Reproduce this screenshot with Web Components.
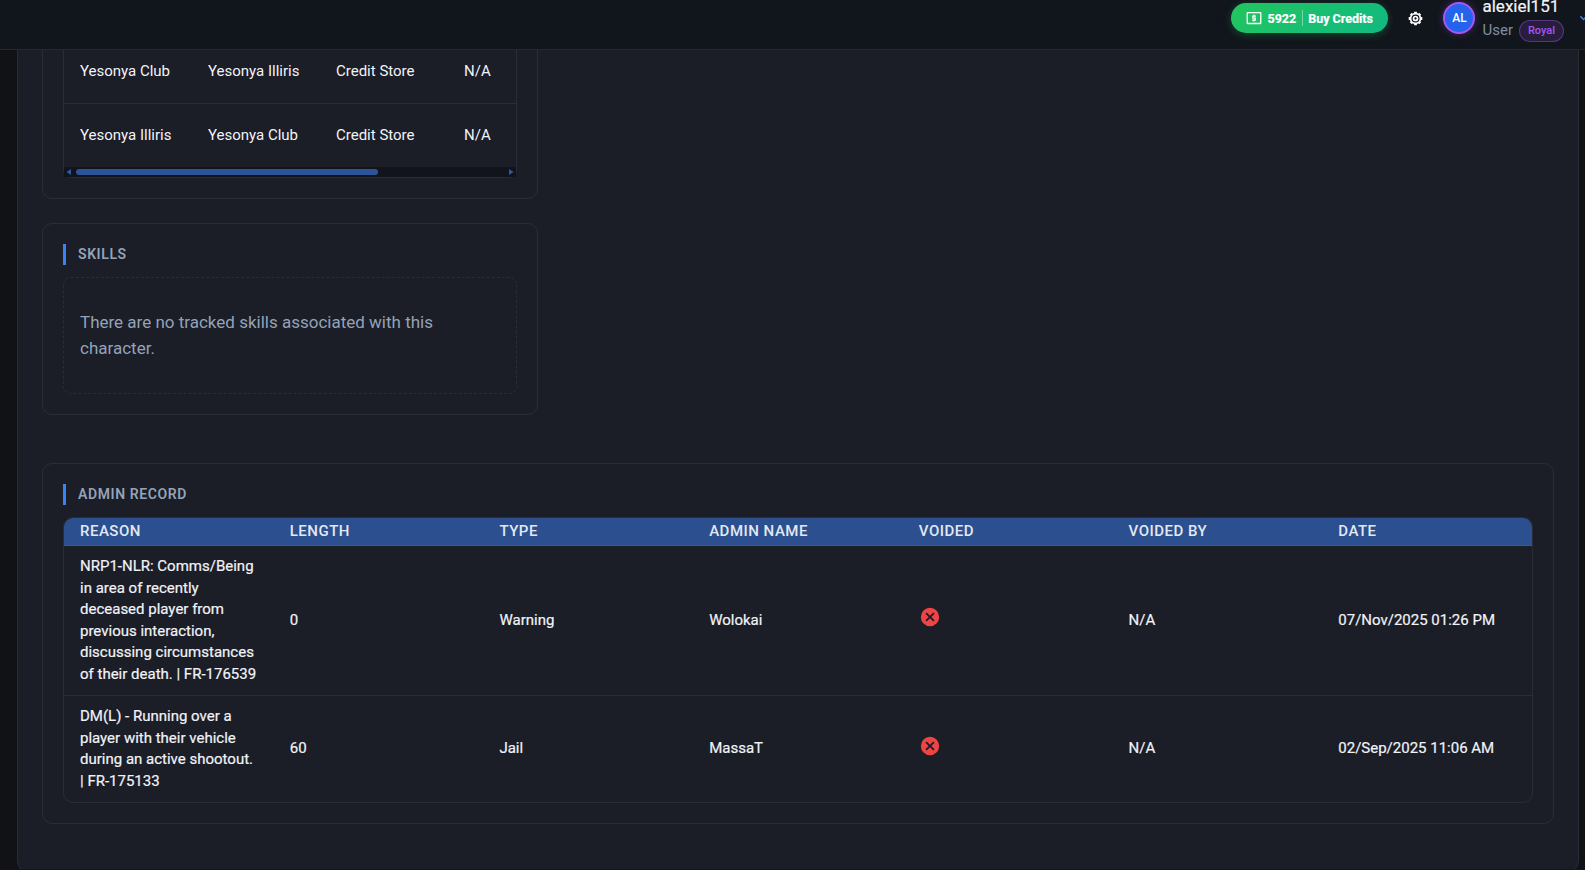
<!DOCTYPE html>
<html lang="en">
<head>
<meta charset="UTF-8">
<title>Character</title>
<style>
    :root {
        --bg: #111216;
        --bar: #11151c;
        --panel: #1b1d27;
        --line: #2a2c37;
        --text: #f1f3f7;
        --muted: #94a3b8;
        --accent: #3b82f6;
        --primary: #2b4f8f;
    }
    html, body {
        margin: 0;
        height: 870px;
        overflow: hidden;
        background: var(--bg);
        color: var(--text);
        font-family: Roboto, "Liberation Sans", sans-serif;
        font-size: 15px;
    }
</style>
</head>
<body>
<character-page>
    <top-bar slot="header">
        <credits-button amount="5922">Buy Credits</credits-button>
        <settings-icon></settings-icon>
        <user-menu name="alexiel151" initials="AL" role-name="User" rank="Royal"></user-menu>
    </top-bar>
    <info-card class="half">
        <transfer-table></transfer-table>
    </info-card>
    <info-card class="half" heading="Skills">
        <empty-note>There are no tracked skills associated with this character.</empty-note>
    </info-card>
    <info-card class="record" heading="Admin Record">
        <record-table></record-table>
    </info-card>
</character-page>

<script>
// Small helper: open shadow root with the given markup
class BaseElement extends HTMLElement {
    constructor() {
        super();
        this.attachShadow({ mode: 'open' });
    }
    connectedCallback() {
        this.shadowRoot.innerHTML = this.render();
    }
}

class CharacterPage extends BaseElement {
    render() {
        return `
            <style>
                :host {
                    display: flex;
                    flex-direction: column;
                    box-sizing: border-box;
                    height: 870px;
                    border-bottom: 1px solid #14151d;
                }
                main {
                    flex: 1;
                    min-height: 0;
                    overflow: hidden;
                    padding: 0 6px 0 17px;
                }
                /* page is scrolled, so the panel starts above the bar */
                .panel {
                    margin-top: -57px;
                    padding: 24px 24px 48px;
                    background: var(--panel);
                    border: 1px solid var(--line);
                    border-radius: 12px;
                    display: flex;
                    flex-direction: column;
                    gap: 24px;
                }
                ::slotted(.half) { width: 496px; }
                ::slotted(.record) { margin-top: 24px; }
            </style>
            <slot name="header"></slot>
            <main><div class="panel"><slot></slot></div></main>
        `;
    }
}

class TopBar extends BaseElement {
    render() {
        return `
            <style>
                :host {
                    display: block;
                    flex: none;
                    height: 49px;
                    background: var(--bar);
                    border-bottom: 1px solid #262831;
                }
                .row {
                    display: flex;
                    align-items: center;
                    justify-content: flex-end;
                    height: 36px;
                }
            </style>
            <div class="row"><slot></slot></div>
        `;
    }
}

class CreditsButton extends BaseElement {
    render() {
        return `
            <style>
                :host {
                    display: flex;
                    align-items: center;
                    box-sizing: border-box;
                    width: 157px;
                    height: 30px;
                    margin-right: 20px;
                    padding-left: 15px;
                    border-radius: 15px;
                    background: linear-gradient(135deg, #22c55e, #10b981);
                    box-shadow: 0 2px 8px rgba(34, 197, 94, .3);
                    color: #fff;
                    font-size: 12.5px;
                    font-weight: 700;
                    -webkit-text-stroke: .2px #fff;
                    white-space: nowrap;
                }
                svg { margin-right: 5px; }
                i { width: 1px; height: 16px; margin: 0 5px 0 6px; background: rgba(255, 255, 255, .4); }
            </style>
            <svg width="16" height="14" viewBox="0 0 16 14" fill="none" stroke="#fff">
                <rect x="1.2" y="1.7" width="13.6" height="10.8" rx=".6" stroke-width="1.3"/>
                <path d="M10 5.1H6.9v2h2.3v2H6M8 3.7v1.4M8 9.1v1.4" stroke-width="1.3"/>
            </svg>
            <span>${this.getAttribute('amount')}</span><i></i><slot></slot>
        `;
    }
}

class SettingsIcon extends BaseElement {
    render() {
        return `
            <style>
                :host { display: flex; margin-right: 20px; }
            </style>
            <svg width="15" height="16" viewBox="-7.5 -8.5 15 16" fill="none" stroke="#fff">
                <circle r="4.9" stroke-width="1.7"/>
                <circle r="2" stroke-width="1.7"/>
                <path d="M0-5.2V-6.8M0 5.2V6.8M-5.2 0H-6.8M5.2 0H6.8M-3.7-3.7l-1-1M3.7-3.7l1-1M-3.7 3.7l-1 1M3.7 3.7l1 1" stroke-width="2.8"/>
            </svg>
        `;
    }
}

class UserMenu extends BaseElement {
    render() {
        return `
            <style>
                :host { display: flex; align-items: center; }
                .avatar {
                    display: flex;
                    align-items: center;
                    justify-content: center;
                    box-sizing: border-box;
                    width: 32px;
                    height: 32px;
                    margin-right: 7px;
                    border: 2px solid #a855f7;
                    border-radius: 50%;
                    background: #2563eb;
                    box-shadow: 0 0 8px rgba(168, 85, 247, .3);
                    font-size: 12px;
                    font-weight: 500;
                    color: #fff;
                }
                .name { font-size: 17px; line-height: 12px; margin: 6px 0 8px; -webkit-text-stroke: .2px; }
                .sub { display: flex; align-items: center; height: 22px; }
                .role { color: var(--muted); opacity: .85; line-height: 18px; margin: 0 6px 3px 0; }
                .rank {
                    box-sizing: border-box;
                    width: 45px;
                    height: 22px;
                    line-height: 19px;
                    text-align: center;
                    border: 1px solid rgba(168, 85, 247, .4);
                    border-radius: 11px;
                    background: rgba(168, 85, 247, .15);
                    color: #a855f7;
                    font-size: 11px;
                    font-weight: 500;
                }
                /* the chevron runs off the right edge of the window */
                .more { width: 5px; margin-left: 16px; overflow: hidden; }
                .more svg { display: block; }
            </style>
            <div class="avatar">${this.getAttribute('initials')}</div>
            <div>
                <div class="name">${this.getAttribute('name')}</div>
                <div class="sub">
                    <span class="role">${this.getAttribute('role-name')}</span>
                    <span class="rank">${this.getAttribute('rank')}</span>
                </div>
            </div>
            <div class="more">
                <svg width="8" height="6" viewBox="0 0 8 6" fill="none" stroke="#3b82f6" stroke-width="1.4">
                    <path d="M.4 1.3 3.6 4.5 6.8 1.3"/>
                </svg>
            </div>
        `;
    }
}

class InfoCard extends BaseElement {
    render() {
        const heading = this.getAttribute('heading');
        return `
            <style>
                :host {
                    display: block;
                    box-sizing: border-box;
                    padding: 20px;
                    border: 1px solid var(--line);
                    border-radius: 10px;
                }
                h3 {
                    margin: 0 0 12px;
                    padding-left: 12px;
                    border-left: 3px solid var(--accent);
                    color: var(--muted);
                    font-size: 14px;
                    font-weight: 600;
                    line-height: 21px;
                    letter-spacing: .6px;
                    text-transform: uppercase;
                }
            </style>
            ${heading ? `<h3>${heading}</h3>` : ''}
            <slot></slot>
        `;
    }
}

class EmptyNote extends BaseElement {
    render() {
        return `
            <style>
                :host {
                    display: block;
                    padding: 32px 16px;
                    border: 1px dashed var(--line);
                    border-radius: 8px;
                    color: var(--muted);
                    font-size: 17px;
                    line-height: 25.5px;
                }
            </style>
            <slot></slot>
        `;
    }
}

class TransferTable extends BaseElement {
    render() {
        const rows = [
            ['Yesonya Club', 'Yesonya Illiris', 'Credit Store', 'N/A'],
            ['Yesonya Illiris', 'Yesonya Club', 'Credit Store', 'N/A']
        ];
        return `
            <style>
                :host {
                    display: block;
                    border: 1px solid var(--line);
                    border-radius: 8px;
                }
                .scroll { overflow: hidden; }
                .row {
                    display: grid;
                    grid-template-columns: repeat(4, 128px);
                    align-items: center;
                    height: 63px;
                }
                .row + .row { border-top: 1px solid var(--line); }
                .row span { padding: 0 16px 2px; }
                .track {
                    display: flex;
                    align-items: center;
                    height: 10px;
                    padding: 0 2px;
                    background: #11141a;
                }
                .thumb { width: 302px; height: 6px; margin: 0 auto 0 5px; border-radius: 3px; background: #2c5499; }
            </style>
            <div class="scroll">
                ${rows.map(r => `<div class="row">${r.map(c => `<span>${c}</span>`).join('')}</div>`).join('')}
            </div>
            <div class="track">
                <svg width="5" height="6" viewBox="0 0 5 6"><path d="M5 0v6L.5 3z" fill="#2c5aa8"/></svg>
                <div class="thumb"></div>
                <svg width="5" height="6" viewBox="0 0 5 6"><path d="M0 0v6l4.5-3z" fill="#2c5aa8"/></svg>
            </div>
        `;
    }
}

class VoidedIcon extends BaseElement {
    render() {
        return `
            <style>
                :host { display: block; height: 22px; margin-bottom: 7px; }
            </style>
            <svg width="22" height="22" viewBox="0 0 24 24" fill="#ef4444">
                <path d="M12 2a10 10 0 1 0 0 20 10 10 0 0 0 0-20zm5 13.59L15.59 17 12 13.41 8.41 17 7 15.59 10.59 12 7 8.41 8.41 7 12 10.59 15.59 7 17 8.41 13.41 12z"/>
            </svg>
        `;
    }
}

class RecordTable extends BaseElement {
    render() {
        const head = ['Reason', 'Length', 'Type', 'Admin Name', 'Voided', 'Voided By', 'Date'];
        const icon = '<voided-icon></voided-icon>';
        const rows = [
            ['NRP1-NLR: Comms/Being in area of recently deceased player from previous interaction, discussing circumstances of their death. | FR-176539',
                '0', 'Warning', 'Wolokai', icon, 'N/A', '07/Nov/2025 01:26 PM'],
            ['DM(L) - Running over a player with their vehicle during an active shootout. | FR-175133',
                '60', 'Jail', 'MassaT', icon, 'N/A', '02/Sep/2025 11:06 AM']
        ];
        return `
            <style>
                :host {
                    display: block;
                    border: 1px solid var(--line);
                    border-radius: 10px;
                    overflow: hidden;
                    line-height: 21.5px;
                }
                .row {
                    display: grid;
                    grid-template-columns: repeat(7, 1fr);
                    align-items: center;
                    padding: 10px 0;
                    -webkit-text-stroke: .2px;
                }
                .row + .row { border-top: 1px solid var(--line); }
                .head {
                    box-sizing: border-box;
                    height: 28px;
                    padding: 0;
                    background: var(--primary);
                    border-bottom: 1px solid #345a9e;
                    font-weight: 500;
                    letter-spacing: .5px;
                    text-transform: uppercase;
                    color: #e3e8f2;
                    -webkit-text-stroke: 0;
                }
                .head + .row { border-top: 0; }
                .row > div { padding: 0 16px; }
            </style>
            <div class="row head">${head.map(h => `<div>${h}</div>`).join('')}</div>
            ${rows.map(r => `<div class="row">${r.map(c => `<div>${c}</div>`).join('')}</div>`).join('')}
        `;
    }
}

customElements.define('character-page', CharacterPage);
customElements.define('top-bar', TopBar);
customElements.define('credits-button', CreditsButton);
customElements.define('settings-icon', SettingsIcon);
customElements.define('user-menu', UserMenu);
customElements.define('info-card', InfoCard);
customElements.define('empty-note', EmptyNote);
customElements.define('transfer-table', TransferTable);
customElements.define('voided-icon', VoidedIcon);
customElements.define('record-table', RecordTable);
</script>
</body>
</html>
